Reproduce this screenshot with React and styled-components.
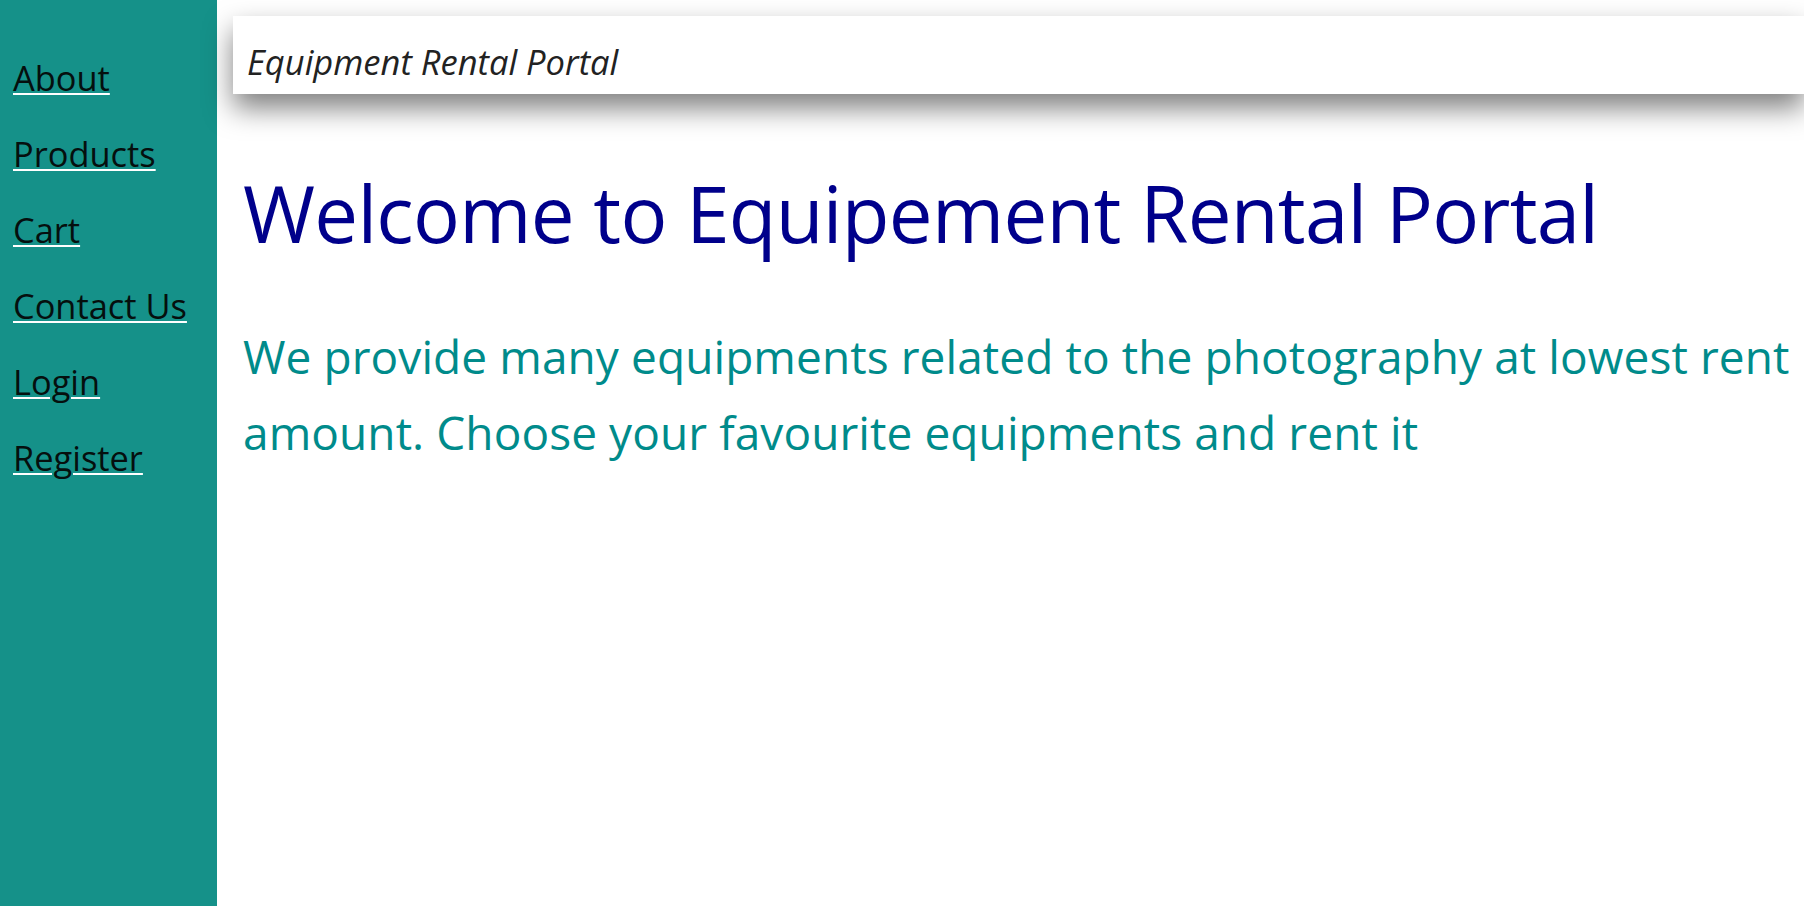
import React from 'react'
import styled, { createGlobalStyle } from 'styled-components'

const GlobalStyle = createGlobalStyle`
  html, body {
    margin: 0;
    padding: 0;
    background: #fff;
    font-family: 'Open Sans', 'Noto Sans', sans-serif;
  }
`

const Layout = styled.div`
  display: flex;
  min-height: 100vh;
`

const Sidebar = styled.nav`
  width: 217px;
  flex-shrink: 0;
  background: #159189;
  padding: 40px 0 0 13px;
  box-sizing: border-box;
`

const NavLink = styled.a`
  display: block;
  width: max-content;
  font-size: 34.4px;
  line-height: 76px;
  color: #050f0e;
  text-decoration: underline;
  text-decoration-color: #fff;
  text-decoration-thickness: 2px;
  text-underline-offset: 2px;
  cursor: pointer;
`

const Main = styled.main`
  flex: 1;
  min-width: 0;
  padding: 16px 0 0 16px;
`

const TopBar = styled.header`
  height: 78px;
  box-sizing: border-box;
  padding: 12px 14px 0;
  background: #fff;
  box-shadow: 0 14px 28px rgba(0, 0, 0, 0.5);
`

const Title = styled.span`
  display: block;
  font-style: italic;
  font-size: 34.5px;
  line-height: 67px;
  color: #222;
`

const Content = styled.section`
  padding-left: 10px;
`

const Heading = styled.h1`
  margin: 69px 0 0;
  font-size: 78px;
  font-weight: 400;
  letter-spacing: -0.72px;
  line-height: 100px;
  color: #00008b;
`

const Lead = styled.p`
  margin: 55px 0 0;
  font-size: 46px;
  letter-spacing: 0.08px;
  line-height: 76px;
  color: #008b8b;
`

const links = ['About', 'Products', 'Cart', 'Contact Us', 'Login', 'Register']

export default function App() {
  return (
    <>
      <GlobalStyle />
      <Layout>
        <Sidebar>
          {links.map(l => (
            <NavLink key={l} href="#">{l}</NavLink>
          ))}
        </Sidebar>
        <Main>
          <TopBar>
            <Title>Equipment Rental Portal</Title>
          </TopBar>
          <Content>
            <Heading>Welcome to Equipement Rental Portal</Heading>
            <Lead>
              We provide many equipments related to the photography at lowest rent amount. Choose your favourite equipments and rent it
            </Lead>
          </Content>
        </Main>
      </Layout>
    </>
  )
}
